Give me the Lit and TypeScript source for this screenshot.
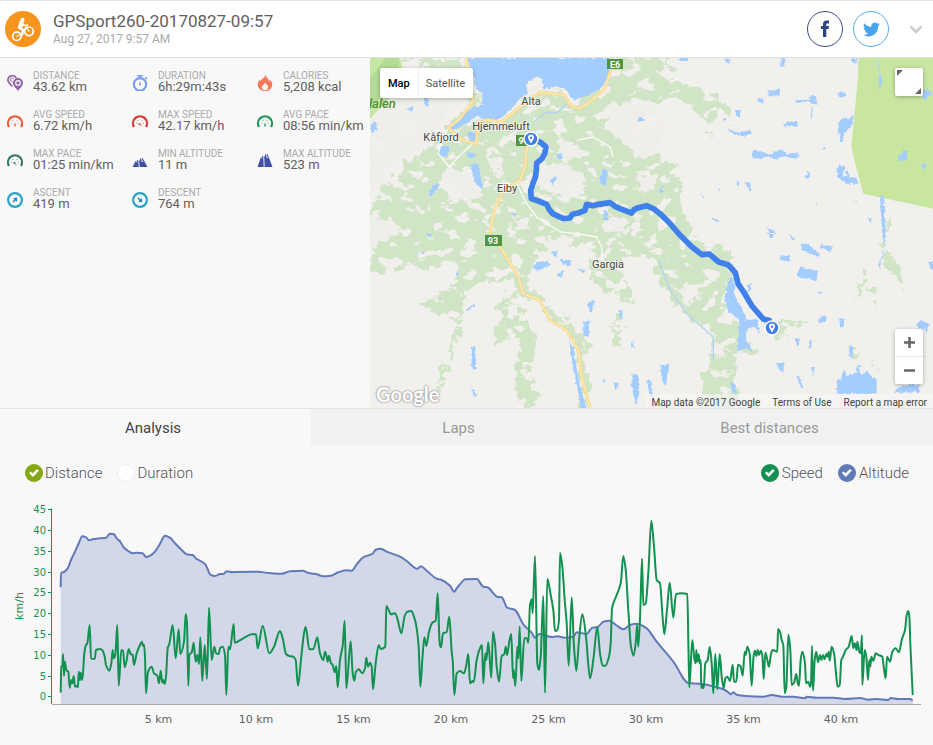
import { LitElement, html, svg, css } from "lit";
import { customElement, state } from "lit/decorators.js";

/* ---------- chart samples: [column offset, "x,y ..."] in thirds of a chart unit ---------- */

type Run = [number, string];

const SPEED: Run[] = [
  [0, "182,575 184,500 187,498 189,462 192,527 195,485 199,510 205,515 209,563 214,540 217,550 221,528 225,560 230,557 234,562 236,515 240,540 242,518 247,540 253,460 258,435 262,430 269,375 273,475 284,477 288,450 300,447 308,452 314,470 318,495 328,512 334,490 338,450 341,475 346,465 352,375 356,557 364,450 369,452 374,502 380,480 386,447 392,462 398,465 402,495 410,460 420,435 426,425 429,438 432,434 435,470 438,580 444,515 455,500 462,520 472,527 477,550 482,512 487,548 490,540 494,552 498,530 503,445 508,432 518,375 527,475 536,388 541,463 552,425 557,342 561,370 565,557 568,465 576,455 581,428 587,485 592,465 597,492 601,412 607,543 614,435 621,537 627,323 635,480 643,440 648,460 656,462 660,445 668,440 675,465 679,585 685,440 690,448 701,372"],
  [690, "14,428 40,415 65,403 78,403 83,445 98,377 118,460 132,440 150,393 158,415 168,462 178,468 190,470 197,480 204,557 214,470 222,400 227,381 238,448 250,448 262,412 270,460 280,480 285,455 290,470 293,485 297,467 303,490 308,495 314,517 319,498 323,562 330,480 338,437 344,362 349,565 362,424 368,520 373,542 378,515 386,508 397,520 405,505 409,473 414,500 420,488 425,500 429,568 436,500 446,435 452,447 466,440 469,318 476,330 483,343 495,340 502,355 514,400 524,348 532,335 544,333 552,350 560,385 566,440 571,560 577,480 583,412 589,438 597,395 607,368 617,362 623,280 629,430 633,442 639,400 650,396 658,350 665,455 668,480 673,585 680,520"],
  [1380, "0,513 12,520 18,500 25,462 30,550 37,543 41,547 50,480 58,450 66,435 70,550 76,460 79,480 85,427 94,533 99,396 105,430 110,500 117,545 125,468 133,462 137,440 141,465 148,425 154,402 159,533 161,510 166,558 172,440 175,475 179,380 184,543 193,415 200,415 205,428 210,315 215,298 218,340 225,168 232,490 237,510 242,470 250,288 255,578 262,236 272,285 280,330 285,393 292,390 297,360 300,158 307,200 314,300 320,370 326,497 335,292 342,440 349,513 357,420 367,343 378,410 390,535 400,480 412,380 420,460 428,497 436,497 447,470 452,430 456,325 468,290 482,250 490,168 497,210 505,330 513,440 521,467 528,420 531,375 535,440 541,330 546,176 550,315 557,310 565,220 574,62 582,140 590,240 600,250 607,340 613,403 621,330 629,248 640,353 648,282 665,280 682,282 685,420 688,562 697,420 703,475 707,490 709,450"],
  [2070, "22,485 26,463 29,490 32,480 34,565 37,555 41,565 46,490 53,480 59,440 65,490 70,580 76,462 82,568 89,462 95,530 101,565 106,535 112,530 120,543 128,494 132,545 139,545 144,494 152,500 158,527 164,455 167,465 172,440 179,462 185,557 191,465 195,452 199,468 203,450 207,465 212,452 217,465 221,537 226,458 232,480 237,500 243,462 248,450 262,455 264,387 270,395 275,420 280,437 284,580 289,560 295,404 301,450 305,555 312,548 319,522 323,548 327,557 332,480 337,455 345,490 348,550 355,545 360,560 363,550 366,438 369,572 374,480 379,455 384,487 390,465 394,480 399,465 404,478 409,462 413,470 416,455 419,482 425,440 433,465 438,520 443,560 449,555 454,480 460,468 467,450 476,440 485,408 490,445 494,430 500,450 502,425 508,455 512,460 516,406 517,555 524,450 529,470 534,540 538,480 541,500 544,470 550,482 557,460 565,465 577,470 581,500 587,535 591,470 600,485 607,455 617,445 627,457 635,420 645,390 650,345 655,333 658,350 661,430 668,583"],
];

const ALTITUDE: Run[] = [
  [0, "182,262 183,218 190,217 203,205 213,180 225,155 237,128 247,109 258,112 268,121 280,117 300,115 318,113 330,101 342,103 350,115 360,124 372,143 385,153 398,160 410,158 428,160 438,171 450,167 463,157 478,135 495,107 510,113 525,130 545,150 560,163 578,165 590,177 600,182 615,192 622,205 630,223 645,228 660,222 670,222 680,214 698,217"],
  [690, "10,216 85,215 115,219 155,221 180,214 218,212 235,219 260,223 280,229 303,227 325,217 350,211 365,212 380,193 400,172 428,161 436,150 452,146 470,155 510,170 530,183 562,206 572,199 590,212 620,236 635,240 660,257 673,275 682,262"],
  [1380, "0,253 15,238 50,237 70,260 82,262 112,290 125,292 142,323 165,330 190,373 215,398 225,413 238,402 275,411 292,409 315,413 340,410 350,397 380,402 397,383 412,382 430,365 448,362 468,375 490,388 512,374 530,371 560,385 590,425 640,485 687,550"],
  [2070, "3,550 35,552 75,560 100,568 115,577 123,583 130,577 140,584 165,588 220,590 245,585 275,590 310,590 345,595 350,590 380,593 430,593 465,597 510,594 535,599 560,597 595,600 602,594 625,597 660,597 668,602"],
];

const points = (runs: Run[]) =>
  runs.flatMap(([off, s]) =>
    s.split(" ").map((p) => {
      const [x, y] = p.split(",").map(Number);
      return [(x + off) / 3, y / 3];
    })
  );

/* Monotone cubic curve: smooth, with flat tangents at peaks and dips. */
function curve(pts: number[][]): string {
  const n = pts.length;
  const d = pts.slice(1).map((p, i) => (p[1] - pts[i][1]) / (p[0] - pts[i][0]));
  const m = pts.map((_, i) => {
    if (i === 0) return d[0];
    if (i === n - 1) return d[n - 2];
    if (d[i - 1] * d[i] <= 0) return 0;
    return (2 * d[i - 1] * d[i]) / (d[i - 1] + d[i]);
  });
  let out = `M${pts[0][0].toFixed(1)} ${pts[0][1].toFixed(1)}`;
  for (let i = 1; i < n; i++) {
    const [x0, y0] = pts[i - 1];
    const [x1, y1] = pts[i];
    const h = (x1 - x0) / 3;
    out += `C${[x0 + h, y0 + h * m[i - 1], x1 - h, y1 - h * m[i], x1, y1].map((v) => v.toFixed(1)).join(" ")}`;
  }
  return out;
}

const SPEED_PATH = curve(points(SPEED));
const ALT_PATH = curve(points(ALTITUDE));
const Y_TICKS = [0, 5, 10, 15, 20, 25, 30, 35, 40, 45];
const X_TICKS = [5, 10, 15, 20, 25, 30, 35, 40];

/* ---------- icons ---------- */

const gauge = (color: string, angle: number) => svg`
  <svg viewBox="0 0 16 16" aria-hidden="true">
    <path d="M2 12.900A7 7 0 1 1 14 12.900" fill="none" stroke=${color} stroke-width="2.200"/>
    <path d="M4 9L5.200 9.300M5.700 6L6.300 7M10.300 6L9.700 7M12 9L10.800 9.300" stroke=${color} stroke-width="1" opacity=".6"/>
    <path d="M8 8L8.900 11.500A.9.900 0 0 1 7.100 11.500Z" fill=${color} transform="rotate(${angle} 8 10.500)"/>
  </svg>`;

const peaks = (top: number) => svg`
  <svg viewBox="0 0 16 16" aria-hidden="true">
    <path d="M.5 14L4.300 ${top + 2}H5.600L6.900 ${top + 4}L8.600 ${top}H10.600L15.500 14Z" fill="#3f51a5"/>
    <path d="M7.200 14L6.800 ${top + 4}M4.300 ${top + 2}L5 ${top + 4.500}M9.500 ${top}L10.200 ${top + 4}L11.200 ${top + 3}" stroke="#f8f8f8" stroke-width=".9" fill="none"/>
  </svg>`;

const dial = (angle: number) => svg`
  <svg viewBox="0 0 16 16" aria-hidden="true">
    <circle cx="8" cy="8" r="6.900" fill="none" stroke="#2aa3c4" stroke-width="2.200"/>
    <path d="M5.200 7.200H8V5.200L11.200 8L8 10.800V8.800H5.200Z" fill="#2585b5" transform="rotate(${angle} 8 8)"/>
  </svg>`;

const pins = svg`
  <svg viewBox="0 0 16 16" aria-hidden="true">
    <path d="M5.300 11.500C3 8.800.9 7.300.9 4.800A4.400 4.400 0 0 1 9.200 3" fill="none" stroke="#9b6fb0" stroke-width="1.900"/>
    <path d="M5.500 6.500A1.800 1.800 0 1 1 6.700 4" fill="none" stroke="#9b6fb0"/>
    <path d="M11 16C9.500 13.500 6 10.900 6 8A5 5 0 0 1 16 8C16 10.900 12.500 13.500 11 16Z" fill="#9061a8"/>
    <circle cx="11" cy="7.900" r="2.300" fill="none" stroke="#f8f8f8" stroke-width="1.200"/>
  </svg>`;

const stopwatch = svg`
  <svg viewBox="0 0 16 16" aria-hidden="true">
    <circle cx="8" cy="9.300" r="6.200" fill="none" stroke="#7b9cf0" stroke-width="2.100"/>
    <path d="M5.200.7H10.800M8 .7V3M13.200 2.300L14.800 3.900" stroke="#7b9cf0" stroke-width="1.600"/>
    <path d="M8 6L8.900 9.600A.9.900 0 0 1 7.100 9.600Z" fill="#6a86cf"/>
  </svg>`;

const flame = svg`
  <svg viewBox="0 0 16 16" aria-hidden="true">
    <path d="M8.600 0C9.200 2.600 11.800 3.700 12 6.400C12.600 6 12.900 5.300 12.900 4.400C14.300 5.900 15.300 7.800 15.300 9.800A7 6.200 0 0 1 .7 9.800C.7 7.600 1.700 5.600 2.900 4.200C2.900 5.200 3.200 5.900 3.800 6.300C4.200 3.800 7.500 3 8.600 0Z" fill="#f4795b"/>
    <path d="M8 7.300C8.300 9 11.200 10 11.200 12.300A3.200 2.900 0 0 1 4.800 12.300C4.800 10.600 7.400 9.500 8 7.300Z" fill="#fff3ec"/>
  </svg>`;

const cyclist = svg`
  <svg viewBox="0 0 36 36" aria-hidden="true">
    <g fill="none" stroke="#fff" stroke-linecap="round" stroke-linejoin="round">
      <circle cx="11.800" cy="25.300" r="4.200" stroke-width="1.700"/>
      <circle cx="24" cy="20.300" r="4.300" stroke-width="1.700"/>
      <path d="M11.800 25.300L17.500 22.500L21 16L24 20.300" stroke-width="1.200"/>
      <path d="M16.500 11.500L14.200 16.600L18.300 19L16.800 24" stroke-width="2.600"/>
      <path d="M17 11.500L18.700 14.300L22.300 14.300" stroke-width="1.700"/>
    </g>
    <path d="M14.800 9.600L18.500 11.200L17.800 16L12.600 17.200Z" fill="#fff"/>
    <circle cx="17.400" cy="8.900" r="2.100" fill="#fff"/>
  </svg>`;

const STATS = [
  ["DISTANCE", "43.62 km", pins],
  ["DURATION", "6h:29m:43s", stopwatch],
  ["CALORIES", "5,208 kcal", flame],
  ["AVG SPEED", "6.72 km/h", gauge("#ee5a3c", 0)],
  ["MAX SPEED", "42.17 km/h", gauge("#d8382f", 130)],
  ["AVG PACE", "08:56 min/km", gauge("#1d9a58", 0)],
  ["MAX PACE", "01:25 min/km", gauge("#347c60", 130)],
  ["MIN ALTITUDE", "11 m", peaks(5)],
  ["MAX ALTITUDE", "523 m", peaks(1)],
  ["ASCENT", "419 m", dial(-45)],
  ["DESCENT", "764 m", dial(45)],
] as const;

/* ---------- map ---------- */

const pin = (x: number, y: number) => svg`
  <g transform="translate(${x} ${y})">
    <circle r="7" fill="#3f7fe8" stroke="#fff" stroke-width="1.500"/>
    <path d="M0 4.500C-1 2.500-3-.2-3-1.500A3 3 0 0 1 3-1.500C3-.2 1 2.500 0 4.500Z" fill="#fff"/>
    <circle cy="-1.300" r="1.200" fill="#3f7fe8"/>
  </g>`;

const LAKES =
  "M290 3L720 3L718 60L690 95L640 120L610 130L590 100L560 88L520 98L515 60L490 62L468 85L475 110L450 125L420 160L390 185L350 190L320 175L290 200L250 222L230 210L260 185L300 155L335 145L338 110L318 95L310 50Z " +
  "M290 225L322 228L318 255L300 252Z M215 265L240 270L232 300L205 292Z M288 285L318 290L308 305L292 300Z M300 322L325 320L338 395L318 385Z M175 408L188 385L210 380L200 400L180 418Z M0 200L18 195L22 215L5 225Z " +
  "M690 360L700 332L712 345L708 385L690 378Z M700 460L716 462L714 490L702 490Z M803 185L815 175L824 190L812 197Z M540 375L555 355L560 362L548 382Z M110 155L130 148L128 165Z M165 120L175 122L172 150L166 145Z M425 465L440 468L432 480Z M560 290L578 288L576 305L562 305Z " +
  "M926 3L955 3L950 12L930 12Z M1060 3L1085 12L1075 18Z M1232 5L1246 5L1244 28L1230 32Z M1442 3L1462 3L1458 20L1446 16Z M1194 102L1230 96L1228 118L1196 118Z M1162 123L1178 125L1182 137L1166 135Z M1275 130L1318 128L1320 116L1338 118L1342 140L1328 142L1318 134L1278 137Z M1404 110L1424 104L1426 118L1408 122Z M1098 158L1112 160L1110 182L1098 175Z M1056 185L1068 186L1066 196Z M1240 200L1258 192L1284 196L1284 208L1242 208Z M1070 215L1105 225L1145 220L1146 230L1120 238L1090 232Z " +
  "M1404 200L1415 185L1440 184L1450 172L1448 200L1422 230L1418 255L1411 255L1410 232L1402 225Z M1145 285L1160 278L1175 285L1200 292L1222 280L1238 278L1250 292L1284 286L1286 300L1275 305L1240 298L1220 308L1195 298L1165 306L1148 302Z M1355 275L1366 270L1364 278Z M1305 365L1315 342L1320 345L1318 362Z M1400 335L1412 324L1425 328L1420 345L1418 360L1428 355L1432 332L1436 360L1460 362L1465 380L1430 380L1402 360Z M1098 372L1108 370L1106 390Z M1125 375L1138 376L1145 400L1140 404Z M993 408L1002 418L1000 425Z M1044 392L1052 395L1048 402Z M868 400L880 385L878 408Z M1335 438L1346 440L1340 448Z M1448 430L1460 435L1458 440Z M1494 483L1505 485L1502 500Z " +
  "M1526 55L1538 68L1532 95L1526 92Z M1660 100L1672 95L1689 112L1675 118L1668 130L1658 122Z M1582 300L1596 295L1600 278L1612 282L1612 308L1588 312Z M1655 320L1666 318L1662 342Z M1530 415L1540 418L1545 480L1548 525L1536 525L1532 460Z M1525 625L1545 570L1540 545L1534 525L1546 525L1544 575L1530 635Z M1190 512L1210 520L1222 528L1200 525Z M1022 485L1048 487L1045 496Z " +
  "M485 630L500 615L535 612L540 625L515 640L498 640Z M570 608L605 610L600 625L580 625Z M545 585L562 580L558 605Z M165 530L188 532L182 544Z M148 588L165 584L160 595Z M286 760L312 740L316 746L292 762Z M306 870L316 866L318 935L310 940L304 925Z M300 980L320 1015L312 1022Z M640 795L658 790L656 840L640 835Z M655 735L675 728L665 768L655 760Z M745 758L758 762L752 790Z M785 950L805 955L808 1010L798 1045L785 990Z M830 965L846 975L848 1020L838 1010Z M732 975L748 980L735 1000Z M698 960L706 975L702 985Z M598 850L610 868L618 920L630 990L650 1053L632 1053L622 990L608 930Z M788 845L792 870L786 870Z M258 650L268 635L262 665Z M560 650L580 640L576 665Z M620 635L650 640L640 648Z " +
  "M1080 660L1090 665L1096 720L1118 760L1130 790L1160 785L1170 830L1152 810L1130 815L1128 850L1148 880L1120 875L1100 885L1108 790L1075 765L1064 720Z M1292 560L1312 560L1350 590L1346 600L1320 590L1296 580Z M1352 560L1390 570L1380 582L1355 575Z M1228 595L1262 598L1260 612L1232 610Z M1284 635L1300 630L1325 640L1344 640L1340 672L1315 665L1284 662Z M1190 525L1212 535L1202 545Z M1130 685L1144 680L1142 705L1134 702Z M1255 530L1276 545L1270 550Z M1340 705L1356 704L1354 712Z M1344 790L1354 775L1370 780L1366 798L1348 798Z M1408 785L1424 785L1420 810L1410 808Z M870 925L898 922L888 985L878 978Z M1218 918L1242 918L1240 945L1228 938Z M1278 955L1285 952L1300 992L1294 995Z M1322 930L1334 930L1330 960Z M1318 855L1326 850L1322 878L1316 872Z M1272 845L1290 850L1285 870Z M1080 975L1090 975L1104 1020L1092 1010Z " +
  "M1402 965L1412 970L1420 940L1432 960L1440 950L1455 950L1462 930L1475 955L1490 940L1505 962L1520 970L1520 1010L1400 1010Z M1436 865L1450 870L1445 905L1440 900Z M1574 1000L1590 990L1600 985L1645 985L1650 1005L1575 1008Z M1640 800L1652 790L1665 795L1680 800L1670 830L1664 810L1656 830L1650 812L1642 818Z M1672 615L1689 612L1689 640Z M1460 930L1470 920L1468 945Z";

const GREEN =
  "M95 3L290 3L318 95L290 150L235 205L200 255L150 285L100 330L20 410L0 480L0 640L40 650L90 640L110 620L180 640L250 610L275 640L235 700L155 735L160 765L230 770L262 790L245 860L215 940L200 1000L212 1000L235 930L270 800L285 710L330 680L390 665L440 660L445 705L390 720L375 745L400 780L370 820L375 870L400 850L410 800L435 830L450 870L440 930L440 990L470 1053L510 1053L480 960L500 880L495 830L455 780L450 720L530 740L540 790L600 830L610 860L620 900L630 1053L660 1053L660 980L640 920L640 840L590 790L560 770L520 720L470 690L475 660L500 590L560 570L640 560L680 590L650 640L700 700L790 735L800 725L760 670L755 600L846 600L865 670L910 745L960 780L1010 830L1020 880L1000 960L985 1053L1110 1053L1090 950L1100 880L1170 900L1110 810L1060 770L1065 680L1095 650L1090 600L1050 560L1000 550L970 528L930 450L935 375L890 300L846 285L780 240L700 200L720 160L800 140L900 125L960 130L1000 190L1040 198L1045 155L1075 175L1080 175L1050 118L960 90L860 45L930 55L895 20L870 3L720 3L720 60L640 120L600 140L560 90L520 100L460 130L400 190L330 190L250 222L330 150L318 80Z " +
  "M725 770L745 765L765 800L745 850L755 895L730 860Z M1190 790L1310 788L1310 800L1230 805L1260 845L1180 840Z M1455 725L1480 640L1488 650L1468 725Z M1495 680L1520 700L1528 760L1510 730Z M1535 540L1548 560L1590 640L1615 700L1595 695L1565 640L1535 625Z M1432 855L1470 895L1460 905Z M1500 900L1525 935L1510 925Z M640 830L665 870L640 900Z M1550 470L1560 500L1556 528L1545 525Z M1055 208L1085 215L1070 222Z M1000 200L1035 230L1015 235Z";

const CLEARINGS =
  "M5 100L100 110L190 120L240 150L200 210L190 240L120 290L50 320L30 380L0 400L0 130Z M500 340L540 320L600 325L650 360L640 410L590 430L530 410L505 390Z M705 150L780 130L846 135L880 200L860 290L800 300L730 230L715 190Z M215 345L270 330L330 360L338 420L260 440L215 400Z M0 490L60 480L90 520L40 560L0 570Z M560 250L600 255L640 290L600 310L555 290Z M360 300L400 290L400 350L365 345Z M480 95L510 60L600 90L590 110L500 110Z M700 470L780 490L760 540L700 520Z M430 480L470 490L480 525L430 520Z M120 195L180 170L200 210L140 250Z M360 450L390 440L380 480Z M1000 560L1040 580L1020 600Z M910 690L960 680L1000 720L950 740Z M860 470L900 500L880 520Z M530 545L600 540L590 570L520 590Z M800 345L860 360L850 410L800 400Z M1040 850L1070 860L1060 900L1040 890Z";

const ROADS =
  "M288 3L296 70L310 130L270 185L235 212L270 245L318 262L325 200L350 188L395 195L450 150L510 105L585 115L600 145L630 155L665 130L705 95L722 40L724 3M472 258L465 330L450 370L400 400L372 460L360 530M385 560L415 610L445 660L460 710L510 730L540 790L590 820L625 880L635 960L660 1053";

const mapArt = svg`
  <svg class="terrain" viewBox="0 1 563 350" preserveAspectRatio="xMidYMid slice" role="img" aria-label="Map of the ride from Alta">
    <defs>
      <filter id="ragged" x="-5%" y="-5%" width="110%" height="110%" color-interpolation-filters="sRGB">
        <feTurbulence type="fractalNoise" baseFrequency=".035" numOctaves="4" seed="4" result="n"/>
        <feDisplacementMap in="SourceGraphic" in2="n" scale="50" xChannelSelector="R" yChannelSelector="G" result="edge"/>
        <feTurbulence type="fractalNoise" baseFrequency=".022 .03" numOctaves="3" seed="21"/>
        <feColorMatrix values="0 0 0 0 1  0 0 0 0 1  0 0 0 0 1  16 0 0 0 -9.300" result="holes"/>
        <feComposite in="edge" in2="holes" operator="out"/>
      </filter>
      <filter id="shore" x="-5%" y="-5%" width="110%" height="110%">
        <feTurbulence type="fractalNoise" baseFrequency=".1" numOctaves="2" seed="9" result="n"/>
        <feDisplacementMap in="SourceGraphic" in2="n" scale="12" xChannelSelector="R" yChannelSelector="G"/>
      </filter>
    </defs>
    <rect width="563" height="352" fill="#f2f0ed"/>
    <g transform="scale(.333333)">
      <g filter="url(#ragged)">
        <path d=${GREEN} fill="#d0e4c6"/>
        <path d=${CLEARINGS} fill="#f0eeea"/>
      </g>
      <path d="M0 3H88Q100 60 75 105L30 150L0 185Z" fill="#b4dc95"/>
      <path d="M0 60Q30 30 45 3H0ZM0 180Q60 140 98 40L92 3Q80 80 0 150Z" fill="#c8e6a6"/>
      <path d="M1466 3H1689V455L1480 410Q1460 340 1444 270L1464 60Z" fill="#c9e6a1"/>
      <path d=${LAKES} fill="#a3ccff" filter="url(#shore)"/>
      <path d="M490 195L530 165L560 168L590 140M1520 10L1532 60M1672 112H1689M1326 150L1324 185M866 610L900 700L950 770L1030 840L1030 910" stroke="#b4d3f0" stroke-width="4" fill="none" stroke-linejoin="round"/>
      <g fill="none" stroke="#fbfbf8" stroke-width="4" stroke-linejoin="round">
        <path d="M305 262L275 290L238 330L205 290L215 250L235 215M620 250L670 240L720 270L730 300M440 380L470 440L500 480L540 505L570 525L620 530L680 540L695 570L700 620"/>
      </g>
      <g fill="none" stroke-linejoin="round">
        <path d=${ROADS} stroke="#f1cf83" stroke-width="9"/>
        <path d=${ROADS} stroke="#fde7a9" stroke-width="6"/>
        <path d="M484 245L512 256L528 270L524 290L516 305L500 318L499 340L496 360L488 382L482 400L484 425L505 432L530 442L538 458L548 470L580 485L600 483L607 472L625 468L645 460L650 442L668 446L685 442L720 437L735 448L750 455L785 468L792 458L805 452L830 446L852 456L870 470L896 495L926 530L966 570L996 593L1018 591L1046 615L1074 623L1096 647L1104 680L1121 705L1146 747L1181 787L1198 790L1204 813" stroke="#3f80ea" stroke-width="17"/>
      </g>
    </g>
    <g class="shield">
      <rect x="237" y="2" width="16" height="10" fill="#4f9440"/><text x="245" y="11">E6</text>
      <rect x="146" y="78" width="14" height="11" fill="#4f9440"/><text x="151" y="87">9</text>
      <rect x="115" y="178" width="17" height="11" fill="#4f9440"/><text x="123" y="187">93</text>
    </g>
    <g class="place">
      <text x="161" y="48">Alta</text>
      <text x="131" y="73">Hjemmeluft</text>
      <text x="71" y="84">Kåfjord</text>
      <text x="137" y="135">Eiby</text>
      <text x="238" y="211">Gargia</text>
    </g>
    <text class="park" x="-5" y="51">dalen</text>
    ${pin(161, 82)} ${pin(402, 271)}
  </svg>`;

@customElement("app-root")
export class AppRoot extends LitElement {
  @state() private speed = true;
  @state() private altitude = true;

  static styles = css`
    :host { display: block; min-height: 100vh; background: #f8f8f8; color: #606060; font-family: Roboto, sans-serif; }
    * { box-sizing: border-box; }
    svg { display: block; }
    button { font: inherit; color: inherit; border: 0; padding: 0; background: none; cursor: pointer; }
    header { display: flex; align-items: center; gap: 10px; padding: 10px 10px 10px 5px; background: #fff; border-top: 1px solid #e3e3e3; border-bottom: 1px solid #e0e0e0; }
    .sport { width: 36px; height: 36px; border-radius: 50%; background: #f7941e; }
    .title { flex: 1; padding-left: 2px; }
    h1 { margin: 0; font-size: 17px; line-height: 20px; font-weight: 400; color: #606060; }
    .date { font-size: 12px; line-height: 16px; color: #aaa; }
    .share { display: grid; place-items: center; width: 36px; height: 36px; border: 1px solid; border-radius: 50%; }
    .fb { color: #3b4a86; }
    .tw { color: #55acee; }
    .share svg { width: 20px; height: 20px; }
    .share.tw svg { width: 17px; height: 17px; }
    .more { width: 14px; height: 20px; margin-left: 10px; display: grid; place-items: center; }
    .overview { display: grid; grid-template-columns: 370px minmax(0, 1fr); }
    .stats { display: grid; grid-template-columns: repeat(3, 125px); grid-auto-rows: 39px; margin: 0; padding: 5px 0 0 7px; overflow: hidden; }
    .stat { display: grid; grid-template-columns: 16px 1fr; column-gap: 10px; align-items: center; white-space: nowrap; }
    .stat svg { width: 16px; height: 16px; }
    .stat .text { padding-bottom: 2px; }
    .stat dt { font-size: 10px; line-height: 11px; color: #aaa; }
    .stat dd { margin: 0; font-size: 13px; line-height: 12px; color: #606060; }
    .map { position: relative; min-height: 350px; overflow: hidden; }
    .terrain { position: absolute; inset: 0; width: 100%; height: 100%; }
    .place text { font-size: 11px; text-anchor: middle; fill: #444; stroke: #fff; stroke-width: 2px; stroke-opacity: 0.6; paint-order: stroke; }
    .shield text { font-size: 9px; font-weight: 700; text-anchor: middle; fill: #fff; }
    .park { font-size: 13px; font-style: italic; font-weight: 500; fill: #4b9335; }
    .types, .full, .zoom { position: absolute; background: #fff; border-radius: 2px; box-shadow: 0 1px 4px rgba(0, 0, 0, 0.3); }
    .types { left: 10px; top: 10px; display: flex; height: 30px; font-size: 11px; color: #565656; }
    .types button { padding: 0 8px; }
    .types button + button { padding-left: 7px; border-left: 1px solid #eee; }
    .types .on { color: #000; font-weight: 500; }
    .full { right: 10px; top: 10px; width: 28px; height: 28px; }
    .zoom { right: 10px; bottom: 24px; width: 28px; display: grid; }
    .zoom button { height: 27px; display: grid; place-items: center; }
    .zoom button + button { height: 28px; border-top: 1px solid #e6e6e6; }
    .logo { position: absolute; left: 6px; bottom: 0; font: 700 20px/28px Lato, sans-serif; color: #fff; text-shadow: 0 0 2px #999, 0 0 2px #999, 0 0 1px #aaa; }
    .credits { position: absolute; right: 0; bottom: 0; display: flex; gap: 12px; padding: 3px 6px 0; font-size: 10px; line-height: 11px; color: #444; background: rgba(245, 245, 245, 0.7); }
    .credits a { color: inherit; text-decoration: none; }
    .tabs { display: grid; grid-template-columns: repeat(3, 1fr); border-top: 1px solid #e3e3e3; }
    .tabs button { height: 36px; padding: 2px 16px 0 0; font-size: 15px; color: #999; background: #f1f1f1; }
    .tabs .on { padding-right: 5px; color: #444; background: none; }
    .options { display: flex; justify-content: space-between; padding: 19px 24px 18px 25px; }
    fieldset { display: flex; gap: 15px; border: 0; margin: 0; padding: 0; min-width: 0; }
    .opt { display: flex; align-items: center; gap: 3px; font-size: 15px; line-height: 20px; height: 18px; font-weight: 300; color: #555; }
    .lime { gap: 2px; }
    .opt input { appearance: none; display: grid; place-items: center; width: 18px; height: 18px; margin: 0; border-radius: 50%; background: #fff; border: 1px solid #eee; }
    .opt input:checked { border: 0; background: var(--tone); }
    .opt input:checked::before { content: ""; width: 10px; height: 8px; background: #fff; clip-path: polygon(0 50%, 18% 30%, 38% 52%, 80% 0, 100% 20%, 40% 100%); }
    .lime { --tone: #84a810; }
    .green { --tone: #139150; }
    .blue { --tone: #6279b8; }
    .chart { width: 100%; height: auto; font: 11px "DejaVu Sans", sans-serif; }
    .chart .y { fill: #139150; text-anchor: end; font-size: 10px; }
    .chart .unit { fill: #139150; text-anchor: middle; }
    .chart .x { fill: #606060; text-anchor: middle; }
  `;

  private renderMap() {
    return html`<section class="map">
      ${mapArt}
      <div class="types"><button class="on">Map</button><button>Satellite</button></div>
      <button class="full" aria-label="Toggle fullscreen">
        <svg width="28" height="28" viewBox="0 0 28 28"><path d="M2 2H8L2 8ZM26 26H20L26 20Z" fill="#666"/></svg>
      </button>
      <div class="zoom">
        <button aria-label="Zoom in"><svg width="11" height="11"><path d="M5.500 0V11M0 5.500H11" stroke="#666" stroke-width="2.500"/></svg></button>
        <button aria-label="Zoom out"><svg width="11" height="11"><path d="M0 5.500H11" stroke="#666" stroke-width="2.500"/></svg></button>
      </div>
      <span class="logo">Google</span>
      <div class="credits"><span>Map data ©2017 Google</span><a href="#terms">Terms of Use</a><a href="#report">Report a map error</a></div>
    </section>`;
  }

  private renderChart() {
    const y = (v: number) => 196.300 - v * 4.156;
    return html`<svg class="chart" viewBox="0 0 933 245" role="img" aria-label="Speed and altitude by distance">
      ${this.altitude
        ? svg`<path d="${ALT_PATH}V204H60.700Z" fill="#d3d8e8"/><path d=${ALT_PATH} fill="none" stroke="#6279b8" stroke-width="2" stroke-linejoin="round"/>`
        : ""}
      <path d="M52 204.500H921" stroke="#aaa"/>
      ${this.speed ? svg`<path d=${SPEED_PATH} fill="none" stroke="#139150" stroke-width="2" stroke-linejoin="round" stroke-linecap="round"/>` : ""}
      <path d="M51.500 8.500V204" stroke="#139150"/>
      ${Y_TICKS.map((v) => svg`<path d="M48 ${Math.round(y(v)) + 0.5}H52" stroke="#139150"/><text class="y" x="46" y=${Math.round(y(v)) + 4}>${v}</text>`)}
      ${X_TICKS.map((v) => svg`<text class="x" x=${61 + v * 19.500} y="223">${v} km</text>`)}
      <text class="unit" transform="translate(23 106) rotate(-90)">km/h</text>
    </svg>`;
  }

  render() {
    return html`
      <header>
        <div class="sport">${cyclist}</div>
        <div class="title"><h1>GPSport260-20170827-09:57</h1><div class="date">Aug 27, 2017 9:57 AM</div></div>
        <button class="share fb" aria-label="Share on Facebook">
          <svg viewBox="0 0 20 20"><path d="M8 18V10H6V7H8V5.200C8 2.700 9.200 1.500 11.600 1.500H14V4.500H12.400C11.500 4.500 11.300 4.900 11.300 5.600V7H14L13.600 10H11.300V18Z" fill="#2f4488"/></svg>
        </button>
        <button class="share tw" aria-label="Share on Twitter">
          <svg viewBox="0 0 24 24"><path fill="#4aa3ec" d="M23.950 4.570a10 10 0 0 1-2.820.770 4.960 4.960 0 0 0 2.160-2.720c-.95.550-2 .960-3.130 1.180a4.920 4.920 0 0 0-8.380 4.480C7.690 8.090 4.070 6.130 1.640 3.160a4.820 4.820 0 0 0-.67 2.480c0 1.710.87 3.210 2.190 4.100a4.900 4.900 0 0 1-2.230-.620v.060a4.920 4.920 0 0 0 3.950 4.830 5 5 0 0 1-2.210.080 4.940 4.940 0 0 0 4.600 3.420A9.870 9.870 0 0 1 0 19.540a14 14 0 0 0 7.550 2.210c9.050 0 14-7.500 14-13.980 0-.21 0-.42-.02-.63a9.940 9.940 0 0 0 2.420-2.570z"/></svg>
        </button>
        <button class="more" aria-label="More">
          <svg width="14" height="9"><path d="M1.500 1.500L7 7L12.500 1.500" fill="none" stroke="#ccc" stroke-width="2.500"/></svg>
        </button>
      </header>
      <div class="overview">
        <dl class="stats">
          ${STATS.map(([label, value, icon]) => html`<div class="stat">${icon}<div class="text"><dt>${label}</dt><dd>${value}</dd></div></div>`)}
        </dl>
        ${this.renderMap()}
      </div>
      <nav class="tabs">
        <button class="on">Analysis</button><button>Laps</button><button>Best distances</button>
      </nav>
      <div class="options">
        <fieldset aria-label="Horizontal axis">
          <label class="opt lime"><input type="radio" name="axis" checked />Distance</label>
          <label class="opt lime"><input type="radio" name="axis" />Duration</label>
        </fieldset>
        <fieldset aria-label="Series">
          <label class="opt green"><input type="checkbox" .checked=${this.speed} @change=${() => (this.speed = !this.speed)} />Speed</label>
          <label class="opt blue"><input type="checkbox" .checked=${this.altitude} @change=${() => (this.altitude = !this.altitude)} />Altitude</label>
        </fieldset>
      </div>
      ${this.renderChart()}
    `;
  }
}
